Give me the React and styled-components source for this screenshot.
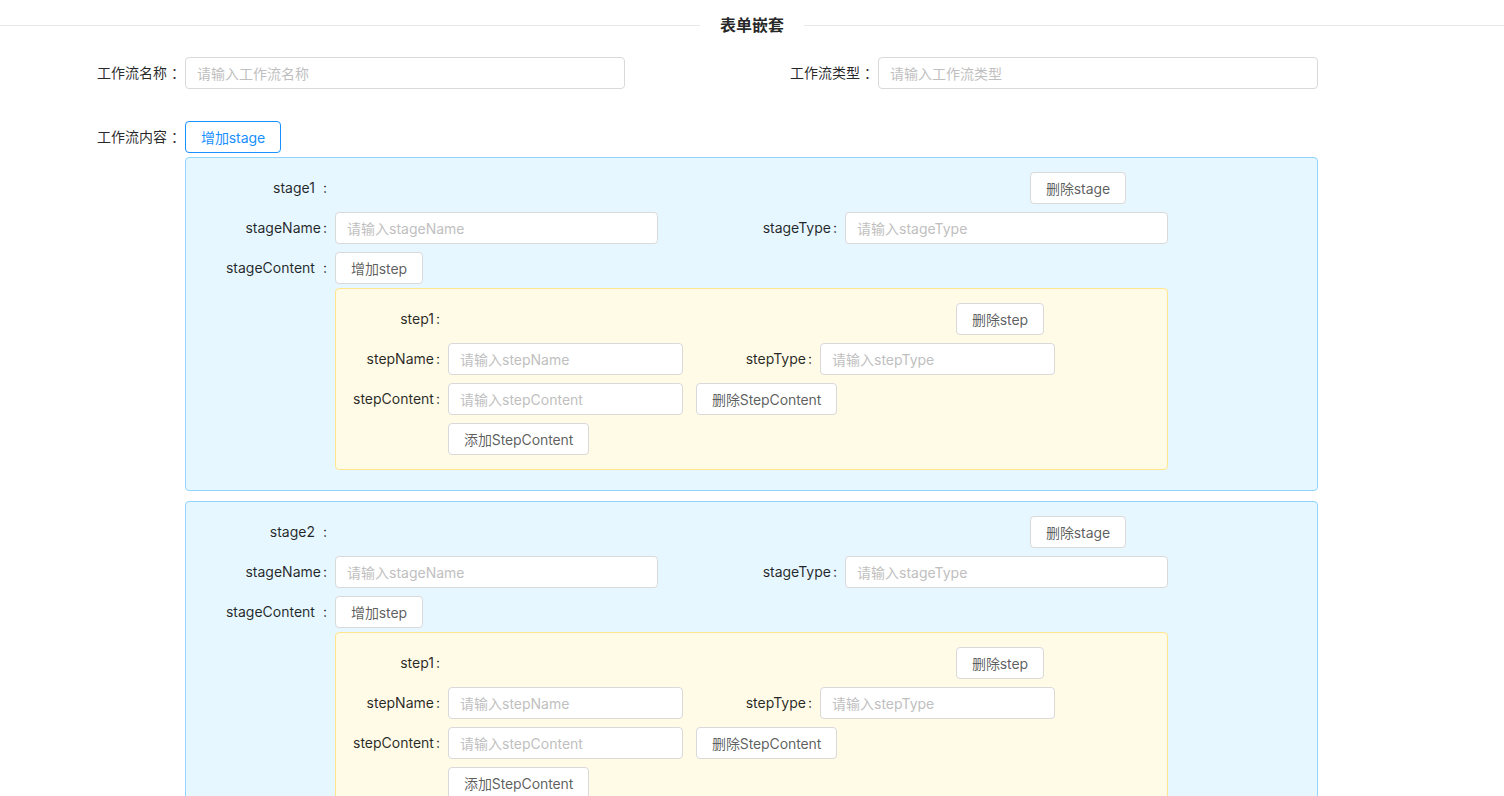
import React from 'react'
import styled, { createGlobalStyle, css } from 'styled-components'

const GlobalStyle = createGlobalStyle`
  html, body {
    margin: 0;
    padding: 0;
    overflow: hidden;
    background: #fff;
  }
  body {
    font-family: Inter, "Noto Sans CJK SC", sans-serif;
    font-size: 14px;
    color: rgba(0, 0, 0, 0.85);
  }
`

const Page = styled.div`
  padding-top: 14px;
`

const Divider = styled.div`
  display: flex;
  align-items: center;
  height: 22px;
  &::before,
  &::after {
    content: '';
    flex: 1;
    border-top: 1px solid #e8e8e8;
  }
`

const DividerText = styled.span`
  padding: 0 20px;
  font-size: 16px;
  font-weight: 700;
  line-height: 22px;
  color: rgba(0, 0, 0, 0.85);
`

const FormGrid = styled.div`
  display: grid;
  grid-template-columns: 185px 440px 253px 440px;
  align-items: center;
  margin-top: 21px;
`

const Label = styled.label`
  text-align: right;
  white-space: nowrap;
  padding-right: 8px;
  line-height: 32px;
  color: rgba(0, 0, 0, 0.85);
  ${({ $col }) => $col && css`grid-column: ${$col};`}
  &::after {
    content: ':';
    margin-left: ${({ $spaced }) => ($spaced ? '8px' : '2px')};
  }
`

// top level labels carry the full width colon
const MainLabel = styled(Label)`
  padding-right: 0;
  &::after {
    content: '：';
    margin-left: 4px;
  }
`

const Input = styled.input`
  box-sizing: border-box;
  width: 100%;
  height: 32px;
  padding: 4px 11px;
  border: 1px solid #d9d9d9;
  border-radius: 4px;
  background: #fff;
  font-family: inherit;
  font-size: 14px;
  color: rgba(0, 0, 0, 0.65);
  outline: none;
  &::placeholder {
    color: #bfbfbf;
  }
`

const Button = styled.button`
  justify-self: start;
  height: 32px;
  padding: 0 15px;
  border: 1px solid #d9d9d9;
  border-radius: 4px;
  background: #fff;
  font-family: inherit;
  font-size: 14px;
  letter-spacing: -0.1px;
  color: rgba(0, 0, 0, 0.65);
  white-space: nowrap;
  cursor: pointer;
  ${({ $col }) => $col && css`grid-column: ${$col};`}
  ${({ $offset }) => $offset && css`margin-left: ${$offset}px;`}
  ${({ $primary }) => $primary && css`
    border-color: #1890ff;
    color: #1890ff;
  `}
`

const StageList = styled.div`
  grid-column: 2 / 5;
  display: flex;
  flex-direction: column;
  gap: 10px;
  margin-top: 4px;
`

const AddStageButton = styled(Button)`
  grid-column: 2;
  margin-top: 32px;
`

const ContentLabel = styled(MainLabel)`
  grid-column: 1;
  margin-top: 32px;
`

const StageBox = styled.div`
  display: grid;
  grid-template-columns: 149px 323px 187px 323px;
  row-gap: 8px;
  align-items: center;
  padding: 14px 0 20px;
  border: 1px solid #91d5ff;
  border-radius: 4px;
  background: #e6f7ff;
`

const StepBox = styled.div`
  grid-column: 2 / 5;
  margin-top: -4px;
  display: grid;
  grid-template-columns: 112px 235px 137px 235px;
  row-gap: 8px;
  align-items: center;
  padding: 14px 0;
  border: 1px solid #ffe58f;
  border-radius: 4px;
  background: #fffbe6;
`

const Step = ({ index }) => (
  <StepBox>
    <Label $col={1}>{`step${index}`}</Label>
    <Button $col={4} $offset={136}>删除step</Button>
    <Label>stepName</Label>
    <Input placeholder="请输入stepName" />
    <Label>stepType</Label>
    <Input placeholder="请输入stepType" />
    <Label>stepContent</Label>
    <Input placeholder="请输入stepContent" />
    <Button $col={3} $offset={13}>删除StepContent</Button>
    <Button $col={2}>添加StepContent</Button>
  </StepBox>
)

const Stage = ({ index }) => (
  <StageBox>
    <Label $col={1} $spaced>{`stage${index}`}</Label>
    <Button $col={4} $offset={185}>删除stage</Button>
    <Label>stageName</Label>
    <Input placeholder="请输入stageName" />
    <Label>stageType</Label>
    <Input placeholder="请输入stageType" />
    <Label $spaced>stageContent</Label>
    <Button>增加step</Button>
    <Step index={1} />
  </StageBox>
)

const App = () => {
  const stages = [1, 2]

  return (
    <Page>
      <GlobalStyle />
      <Divider>
        <DividerText>表单嵌套</DividerText>
      </Divider>
      <FormGrid>
        <MainLabel>工作流名称</MainLabel>
        <Input placeholder="请输入工作流名称" />
        <MainLabel>工作流类型</MainLabel>
        <Input placeholder="请输入工作流类型" />
        <ContentLabel>工作流内容</ContentLabel>
        <AddStageButton $primary>增加stage</AddStageButton>
        <StageList>
          {stages.map(i => <Stage key={i} index={i} />)}
        </StageList>
      </FormGrid>
    </Page>
  )
}

export default App
